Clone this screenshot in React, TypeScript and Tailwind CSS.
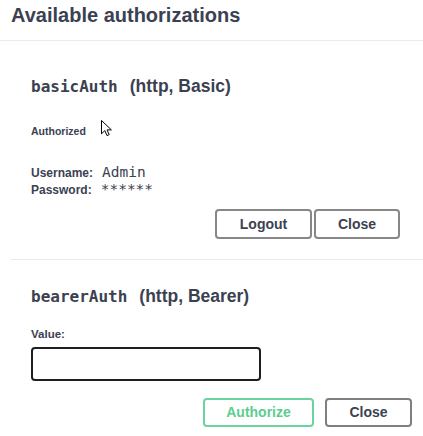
import React from "react";

const sans = "font-['Liberation_Sans',Arial,sans-serif]";
const mono = "font-['DejaVu_Sans_Mono','Liberation_Mono',monospace]";

function Cursor() {
  return (
    <svg
      className="absolute left-[100px] top-[119px]"
      width="14"
      height="18"
      viewBox="0 0 14 18"
    >
      <path
        d="M1.5 1.5 L1.5 14.8 L4.8 11.6 L7 16.6 L9.2 15.6 L7 10.9 L11.4 10.9 Z"
        fill="#ffffff"
        stroke="#000000"
        strokeWidth="1"
        strokeLinejoin="miter"
      />
    </svg>
  );
}

function Heading({ name, kind }: { name: string; kind: string }) {
  return (
    <h4 className="flex items-baseline leading-[24px] text-[#3b4151] font-bold">
      <code className={`${mono} text-[16px] font-bold`}>{name}</code>
      <span className={`${sans} text-[17.5px] ml-[12px]`}>{kind}</span>
    </h4>
  );
}

export default function App() {
  return (
    <div className={`relative w-[423px] h-[436px] overflow-hidden bg-white ${sans} text-[#3b4151]`}>
      {/* modal header */}
      <div className="h-[41px] pl-[11px] pt-[3px] border-b border-[#ebebeb]">
        <h3 className="text-[20px] leading-[24px] font-bold">Available authorizations</h3>
      </div>

      <div className="pl-[11px]">
        {/* basic auth block */}
        <div className="pl-[20px] pr-[23px] pt-[33px] pb-[20px] flex flex-col">
          <Heading name="basicAuth" kind="(http, Basic)" />
          <h6 className="mt-[25px] text-[10.5px] leading-[14px] font-bold">Authorized</h6>
          <div className="mt-[26px] flex flex-col">
            <div className="flex items-baseline h-[17px] leading-[17px]">
              <label className="text-[12px] font-bold">Username:</label>
              <code className={`${mono} text-[14.5px] ml-[9px]`}>Admin</code>
            </div>
            <div className="flex items-baseline h-[17px] leading-[17px]">
              <label className="text-[12px] font-bold">Password:</label>
              <code className={`${mono} text-[14.5px] ml-[9px]`}>******</code>
            </div>
          </div>
          <div className="mt-[11px] flex justify-end gap-[2px]">
            <button className="w-[97px] h-[30px] rounded-[4px] border-2 border-[#878787] text-[14px] font-bold text-[#3b4151] bg-white">
              Logout
            </button>
            <button className="w-[86px] h-[30px] rounded-[4px] border-2 border-[#878787] text-[14px] font-bold text-[#3b4151] bg-white">
              Close
            </button>
          </div>
        </div>

        {/* bearer auth block */}
        <div className="border-t border-[#ebebeb] pl-[20px] pr-[11px] pt-[24px] flex flex-col">
          <Heading name="bearerAuth" kind="(http, Bearer)" />
          <label className="mt-[18px] text-[11.5px] leading-[14px] font-bold">Value:</label>
          <input
            type="text"
            className="mt-[6px] w-[230px] h-[34px] rounded-[4px] border-2 border-[#1f1f1f] bg-white px-2 outline-none"
          />
          <div className="mt-[17px] flex justify-end gap-[11px]">
            <button className="w-[111px] h-[29px] rounded-[4px] border-2 border-[#6cd39e] text-[14px] font-bold text-[#5ccd8f] bg-white">
              Authorize
            </button>
            <button className="w-[87px] h-[29px] rounded-[4px] border-2 border-[#7f7f7f] text-[14px] font-bold text-[#3b4151] bg-white">
              Close
            </button>
          </div>
        </div>
      </div>

      <Cursor />
    </div>
  );
}
